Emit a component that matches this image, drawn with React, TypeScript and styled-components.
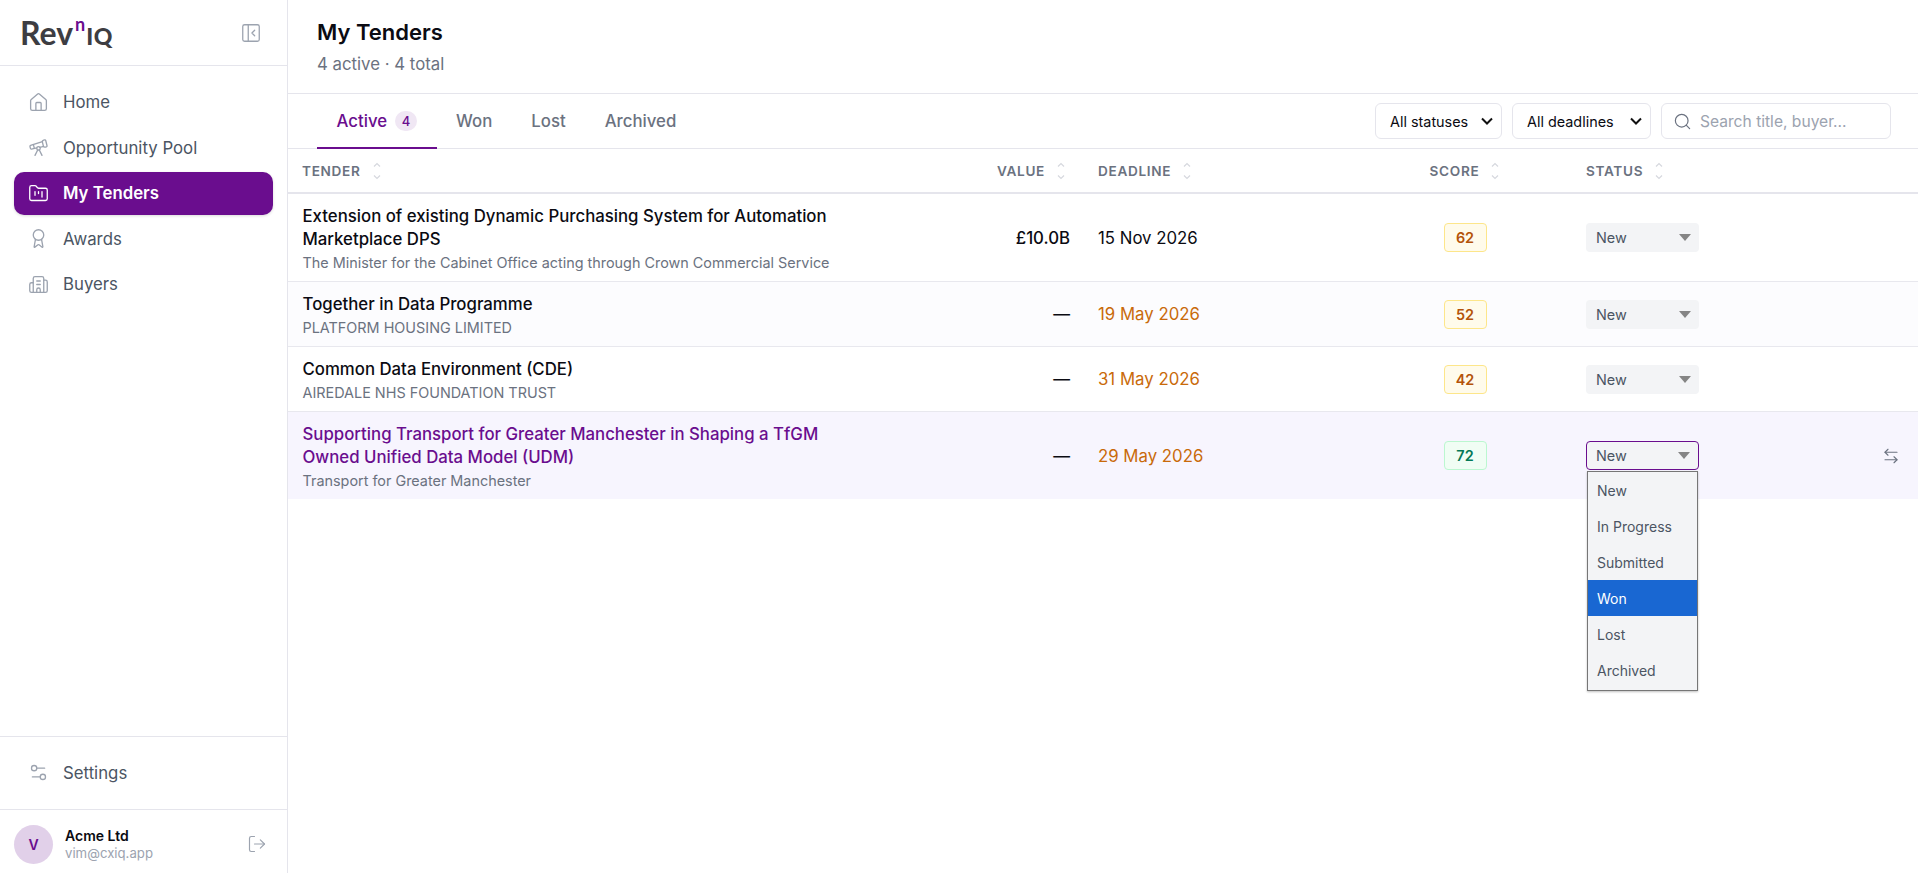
import React from 'react'
import styled, { createGlobalStyle } from 'styled-components'
import {
  House,
  Telescope,
  FolderKanban,
  Award,
  Building2,
  PanelLeftClose,
  Settings2,
  LogOut,
  Search,
  ArrowLeftRight,
} from 'lucide-react'

const PURPLE = '#6a0d8e'

const GlobalStyle = createGlobalStyle`
  html, body { margin: 0; padding: 0; height: 100%; background: #fff; }
  body { font-family: Inter, "Liberation Sans", sans-serif; color: #0b0b12; }
  * { box-sizing: border-box; }
`

const Shell = styled.div`
  display: flex;
  height: 100vh;
  overflow: hidden;
`

const Sidebar = styled.aside`
  width: 288px;
  flex-shrink: 0;
  display: flex;
  flex-direction: column;
  border-right: 1px solid #e5e5ec;
`

const LogoBar = styled.div`
  height: 66px;
  padding: 0 25px 0 20px;
  display: flex;
  align-items: center;
  justify-content: space-between;
  border-bottom: 1px solid #e5e5ec;
  color: #9ca3af;
`

const Logo = styled.div`
  display: flex;
  align-items: baseline;
  color: #3d3d42;
  font-family: Lato, Inter, sans-serif;
  line-height: 1;
`

const LogoRev = styled.span`
  font-size: 32px;
  font-weight: 700;
`

const LogoN = styled.span`
  font-size: 18px;
  font-weight: 700;
  color: ${PURPLE};
  position: relative;
  top: -14px;
  margin: 0 1px 0 2px;
`

const LogoIq = styled.span`
  font-size: 23px;
  font-weight: 900;
  letter-spacing: 0.5px;
`

const Nav = styled.nav`
  flex: 1;
  display: flex;
  flex-direction: column;
  gap: 2.5px;
  padding: 14.5px 14px;
`

const NavItem = styled.a<{ $active?: boolean }>`
  height: 43px;
  padding: 0 14px;
  display: flex;
  align-items: center;
  gap: 14px;
  border-radius: 10px;
  font-size: 16.8px;
  font-weight: ${(p) => (p.$active ? 600 : 400)};
  color: ${(p) => (p.$active ? '#fff' : '#4b5563')};
  background: ${(p) => (p.$active ? PURPLE : 'transparent')};
  box-shadow: ${(p) => (p.$active ? '0 1px 3px rgba(0,0,0,.15)' : 'none')};
  svg {
    color: ${(p) => (p.$active ? '#fff' : '#9ca3af')};
    flex-shrink: 0;
  }
`

const SettingsBox = styled.div`
  height: 73px;
  padding: 14px 14px;
  border-top: 1px solid #e5e5ec;
`

const UserBox = styled.div`
  height: 64px;
  padding: 5px 20px 0 14px;
  display: flex;
  align-items: center;
  gap: 12px;
  border-top: 1px solid #e5e5ec;
`

const Avatar = styled.div`
  width: 39px;
  height: 39px;
  border-radius: 50%;
  background: #e1d0e9;
  color: ${PURPLE};
  display: flex;
  align-items: center;
  justify-content: center;
  font-size: 14px;
  font-weight: 600;
`

const UserText = styled.div`
  flex: 1;
  display: flex;
  flex-direction: column;
`

const UserName = styled.div`
  font-size: 14px;
  font-weight: 600;
  line-height: 18px;
`

const UserMail = styled.div`
  font-size: 13.2px;
  line-height: 17px;
  color: #9ca3af;
`

const LogoutBtn = styled.div`
  color: #9ca3af;
  display: flex;
`

const Main = styled.main`
  flex: 1;
  min-width: 0;
  display: flex;
  flex-direction: column;
`

const PageHead = styled.header`
  height: 94px;
  padding: 18px 29px 0;
  border-bottom: 1px solid #e5e5ec;
`

const Title = styled.h1`
  margin: 0;
  font-size: 22px;
  line-height: 29px;
  font-weight: 600;
`

const Sub = styled.div`
  margin-top: 7px;
  font-size: 16.8px;
  line-height: 20px;
  color: #6b7280;
`

const TabBar = styled.div`
  height: 55px;
  padding: 0 27px 0 29px;
  display: flex;
  align-items: stretch;
  justify-content: space-between;
  border-bottom: 1px solid #e5e5ec;
`

const Tabs = styled.div`
  display: flex;
`

const Tab = styled.div<{ $active?: boolean }>`
  padding: 0 19.5px;
  display: flex;
  align-items: center;
  gap: 8px;
  font-size: 16.8px;
  font-weight: 500;
  color: ${(p) => (p.$active ? PURPLE : '#6b7280')};
  border-bottom: 2px solid ${(p) => (p.$active ? PURPLE : 'transparent')};
  margin-bottom: -1px;
`

const TabCount = styled.span`
  min-width: 22px;
  height: 20px;
  border-radius: 10px;
  background: #f0e7f4;
  font-size: 13px;
  display: flex;
  align-items: center;
  justify-content: center;
`

const Filters = styled.div`
  display: flex;
  align-items: center;
  gap: 10px;
`

const FilterSelect = styled.div<{ $w: number }>`
  width: ${(p) => p.$w}px;
  height: 36px;
  padding: 0 7px 0 14px;
  display: flex;
  align-items: center;
  justify-content: space-between;
  border: 1px solid #e5e5ec;
  border-radius: 6px;
  font-size: 14.4px;
`

const SearchBox = styled.div`
  width: 230px;
  height: 36px;
  padding: 0 11px;
  display: flex;
  align-items: center;
  gap: 8px;
  border: 1px solid #e5e5ec;
  border-radius: 6px;
  font-size: 15.6px;
  color: #9ca3af;
  svg {
    color: #6b7280;
  }
`

const cols = '672px 124px 274px 214px 1fr 58px'

const HeadRow = styled.div`
  height: 45px;
  display: grid;
  grid-template-columns: ${cols};
  align-items: center;
  border-bottom: 2px solid #e5e5ec;
`

const Th = styled.div<{ $end?: boolean; $center?: boolean }>`
  padding: 0 ${(p) => (p.$end ? 18 : 14)}px 0 14px;
  display: flex;
  align-items: center;
  gap: 11px;
  justify-content: ${(p) => (p.$end ? 'flex-end' : p.$center ? 'center' : 'flex-start')};
  font-size: 13.6px;
  font-weight: 600;
  letter-spacing: 0.05em;
  color: #6b7280;
`

const Row = styled.div<{ $bg?: string; $last?: boolean }>`
  display: grid;
  grid-template-columns: ${cols};
  align-items: center;
  background: ${(p) => p.$bg || '#fff'};
  border-bottom: ${(p) => (p.$last ? 'none' : '1px solid #e8e8ee')};
`

const TenderCell = styled.div`
  padding: 11px 14px 9px 14.5px;
`

const TenderTitle = styled.div<{ $hl?: boolean }>`
  max-width: 540px;
  font-size: 16.8px;
  line-height: 23px;
  font-weight: 500;
  color: ${(p) => (p.$hl ? PURPLE : '#0b0b12')};
`

const Buyer = styled.div`
  margin-top: 3px;
  font-size: 14.4px;
  line-height: 18px;
  color: #6b7280;
`

const ValueCell = styled.div`
  padding: 0 14px;
  text-align: right;
  font-size: 16.8px;
  font-weight: 500;
`

const DateCell = styled.div<{ $soon?: boolean }>`
  padding: 0 14px;
  font-size: 16.8px;
  color: ${(p) => (p.$soon ? '#c96a0a' : '#0b0b12')};
`

const ScoreCell = styled.div`
  display: flex;
  justify-content: center;
`

const Score = styled.span<{ $good?: boolean }>`
  width: 43px;
  height: 29px;
  display: flex;
  align-items: center;
  justify-content: center;
  border-radius: 4px;
  font-size: 14.4px;
  font-weight: 600;
  border: 1px solid ${(p) => (p.$good ? '#bbf7d0' : '#fde68a')};
  background: ${(p) => (p.$good ? '#f0fdf4' : '#fffbeb')};
  color: ${(p) => (p.$good ? '#047857' : '#b45309')};
`

const StatusCell = styled.div`
  position: relative;
  padding: 0 14px;
`

const StatusSelect = styled.div<{ $open?: boolean }>`
  width: 113px;
  height: 29px;
  padding: 0 8px 0 ${(p) => (p.$open ? 9 : 10)}px;
  display: flex;
  align-items: center;
  justify-content: space-between;
  background: #f3f4f6;
  border-radius: 4px;
  border: ${(p) => (p.$open ? `1.5px solid ${PURPLE}` : 'none')};
  font-size: 14.4px;
  color: #4b5563;
`

const Caret = styled.span`
  width: 0;
  height: 0;
  border-left: 6px solid transparent;
  border-right: 6px solid transparent;
  border-top: 7px solid #858585;
`

const Popup = styled.div`
  position: absolute;
  left: 15px;
  top: calc(50% + 15px);
  width: 111px;
  background: #f3f4f6;
  border: 1px solid #767676;
  box-shadow: 0 1px 2px rgba(0, 0, 0, 0.25);
  padding: 0 0 2px;
  z-index: 5;
`

const PopupItem = styled.div<{ $sel?: boolean }>`
  height: 36px;
  padding: 2px 9px 0;
  display: flex;
  align-items: center;
  font-size: 14px;
  color: ${(p) => (p.$sel ? '#fff' : '#4b5563')};
  background: ${(p) => (p.$sel ? '#1967d2' : 'transparent')};
`

const ActionCell = styled.div`
  color: #6b7280;
  display: flex;
  padding-left: 22px;
`

function SortIcon() {
  return (
    <svg width="10" height="18" viewBox="0 0 10 18" fill="none" stroke="#d6d8de" strokeWidth="1.2">
      <path d="M2 4.5 5 1.5l3 3" />
      <path d="M2 13.5 5 16.5l3-3" />
    </svg>
  )
}

function Chevron() {
  return (
    <svg width="14" height="10" viewBox="0 0 14 10" fill="none" stroke="#111" strokeWidth="2">
      <path d="M2 2.5 7 7.5l5-5" />
    </svg>
  )
}

const nav = [
  { label: 'Home', icon: House },
  { label: 'Opportunity Pool', icon: Telescope },
  { label: 'My Tenders', icon: FolderKanban, active: true },
  { label: 'Awards', icon: Award },
  { label: 'Buyers', icon: Building2 },
]

const rows = [
  {
    title: 'Extension of existing Dynamic Purchasing System for Automation Marketplace DPS',
    buyer: 'The Minister for the Cabinet Office acting through Crown Commercial Service',
    value: '£10.0B',
    date: '15 Nov 2026',
    score: 62,
  },
  {
    title: 'Together in Data Programme',
    buyer: 'PLATFORM HOUSING LIMITED',
    value: '—',
    date: '19 May 2026',
    soon: true,
    score: 52,
    bg: '#fcfcfe',
  },
  {
    title: 'Common Data Environment (CDE)',
    buyer: 'AIREDALE NHS FOUNDATION TRUST',
    value: '—',
    date: '31 May 2026',
    soon: true,
    score: 42,
  },
  {
    title: 'Supporting Transport for Greater Manchester in Shaping a TfGM Owned Unified Data Model (UDM)',
    buyer: 'Transport for Greater Manchester',
    value: '—',
    date: '29 May 2026',
    soon: true,
    score: 72,
    good: true,
    open: true,
    bg: '#f7f5fe',
  },
]

const statuses = ['New', 'In Progress', 'Submitted', 'Won', 'Lost', 'Archived']

export default function App() {
  return (
    <Shell>
      <GlobalStyle />
      <Sidebar>
        <LogoBar>
          <Logo>
            <LogoRev>Rev</LogoRev>
            <LogoN>n</LogoN>
            <LogoIq>IQ</LogoIq>
          </Logo>
          <PanelLeftClose size={22} strokeWidth={1.4} />
        </LogoBar>
        <Nav>
          {nav.map((n) => (
            <NavItem key={n.label} $active={n.active}>
              <n.icon size={21} strokeWidth={1.5} />
              {n.label}
            </NavItem>
          ))}
        </Nav>
        <SettingsBox>
          <NavItem>
            <Settings2 size={21} strokeWidth={1.5} />
            Settings
          </NavItem>
        </SettingsBox>
        <UserBox>
          <Avatar>V</Avatar>
          <UserText>
            <UserName>Acme Ltd</UserName>
            <UserMail>vim@cxiq.app</UserMail>
          </UserText>
          <LogoutBtn>
            <LogOut size={20} strokeWidth={1.4} />
          </LogoutBtn>
        </UserBox>
      </Sidebar>
      <Main>
        <PageHead>
          <Title>My Tenders</Title>
          <Sub>4 active · 4 total</Sub>
        </PageHead>
        <TabBar>
          <Tabs>
            <Tab $active>
              Active <TabCount>4</TabCount>
            </Tab>
            <Tab>Won</Tab>
            <Tab>Lost</Tab>
            <Tab>Archived</Tab>
          </Tabs>
          <Filters>
            <FilterSelect $w={127}>
              All statuses <Chevron />
            </FilterSelect>
            <FilterSelect $w={139}>
              All deadlines <Chevron />
            </FilterSelect>
            <SearchBox>
              <Search size={19} strokeWidth={1.5} />
              Search title, buyer...
            </SearchBox>
          </Filters>
        </TabBar>
        <HeadRow>
          <Th>
            TENDER <SortIcon />
          </Th>
          <Th $end>
            VALUE <SortIcon />
          </Th>
          <Th>
            DEADLINE <SortIcon />
          </Th>
          <Th $center>
            SCORE <SortIcon />
          </Th>
          <Th>
            STATUS <SortIcon />
          </Th>
          <div />
        </HeadRow>
        {rows.map((r) => (
          <Row key={r.title} $bg={r.bg} $last={r.open}>
            <TenderCell>
              <TenderTitle $hl={r.open}>{r.title}</TenderTitle>
              <Buyer>{r.buyer}</Buyer>
            </TenderCell>
            <ValueCell>{r.value}</ValueCell>
            <DateCell $soon={r.soon}>{r.date}</DateCell>
            <ScoreCell>
              <Score $good={r.good}>{r.score}</Score>
            </ScoreCell>
            <StatusCell>
              <StatusSelect $open={r.open}>
                New <Caret />
              </StatusSelect>
              {r.open && (
                <Popup>
                  {statuses.map((s) => (
                    <PopupItem key={s} $sel={s === 'Won'}>
                      {s}
                    </PopupItem>
                  ))}
                </Popup>
              )}
            </StatusCell>
            <ActionCell>{r.open && <ArrowLeftRight size={18} strokeWidth={1.5} />}</ActionCell>
          </Row>
        ))}
      </Main>
    </Shell>
  )
}
